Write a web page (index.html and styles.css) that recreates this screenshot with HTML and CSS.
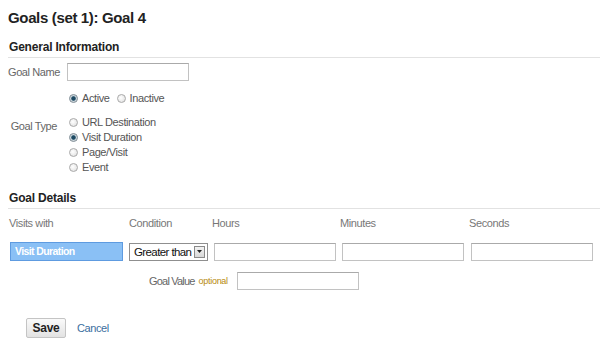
FILE: index.html
```html
<!DOCTYPE html>
<html lang="en">
<head>
    <meta charset="UTF-8">
    <title>Goals (set 1): Goal 4</title>
    <link rel="stylesheet" href="styles.css">
</head>
<body>
    <h1 class="page-title">Goals (set 1): Goal 4</h1>

    <div class="section general">
        <h2 class="section-title">General Information</h2>

        <div class="form-row name-row">
            <label class="row-label" for="goal-name">Goal Name</label>
            <input class="text-input name-input" type="text" id="goal-name">
        </div>

        <div class="form-row status-row">
            <span class="row-label"></span>
            <div class="radio-inline">
                <span class="radio checked"></span><span class="radio-text">Active</span>
                <span class="radio"></span><span class="radio-text">Inactive</span>
            </div>
        </div>

        <div class="form-row type-row">
            <span class="row-label">Goal Type</span>
            <div class="radio-list">
                <div class="radio-item"><span class="radio"></span><span class="radio-text">URL Destination</span></div>
                <div class="radio-item"><span class="radio checked"></span><span class="radio-text">Visit Duration</span></div>
                <div class="radio-item"><span class="radio"></span><span class="radio-text">Page/Visit</span></div>
                <div class="radio-item"><span class="radio"></span><span class="radio-text">Event</span></div>
            </div>
        </div>
    </div>

    <div class="section details">
        <h2 class="section-title">Goal Details</h2>

        <div class="details-grid">
            <div class="col-head">Visits with</div>
            <div class="col-head">Condition</div>
            <div class="col-head">Hours</div>
            <div class="col-head">Minutes</div>
            <div class="col-head">Seconds</div>

            <div class="visit-box">Visit Duration</div>
            <div class="select-box">
                <span class="select-text">Greater than</span>
                <span class="select-btn">
                    <svg width="5" height="3" viewBox="0 0 5 3"><path d="M0 0h5L2.5 3z" fill="#222"/></svg>
                </span>
            </div>
            <input class="text-input" type="text">
            <input class="text-input" type="text">
            <input class="text-input" type="text">
        </div>

        <div class="value-row">
            <span class="value-label">Goal Value</span>
            <span class="optional">optional</span>
            <input class="text-input value-input" type="text">
        </div>
    </div>

    <div class="actions">
        <button class="save-btn" type="button">Save</button>
        <a class="cancel-link" href="#">Cancel</a>
    </div>
</body>
</html>
```

FILE: styles.css
```css
body {
    font-family: "Liberation Sans", Arial, sans-serif;
    font-size: 11px;
    letter-spacing: -0.4px;
    color: #666;
    background: #fff;
    margin: 0;
    padding: 0 0 0 8px;
}

.page-title {
    font-size: 15px;
    font-weight: bold;
    letter-spacing: -0.35px;
    color: #222;
    margin: 0;
    padding-top: 9px;
    line-height: 18px;
}

.section-title {
    font-size: 12px;
    font-weight: bold;
    letter-spacing: -0.2px;
    color: #222;
    margin: 0;
    padding: 0 0 3px 1px;
    line-height: 14px;
    border-bottom: 1px solid #e2e2e2;
}

.general {
    margin-top: 13px;
}

.form-row {
    display: flex;
    align-items: flex-start;
}

.row-label {
    width: 49px;
    text-align: right;
    white-space: nowrap;
    flex-shrink: 0;
    margin-right: 10px;
    line-height: 14px;
}

.name-row {
    margin-top: 5px;
}

.name-row .row-label {
    line-height: 18px;
}

.text-input {
    box-sizing: border-box;
    height: 18px;
    border: 1px solid #c2c2c2;
    border-top-color: #aaa;
    margin: 0;
    padding: 0 3px;
    font-size: 11px;
    background: #fff;
}

.name-input {
    width: 122px;
}

.status-row {
    margin-top: 10px;
}

.radio-inline {
    display: flex;
    align-items: center;
    height: 14px;
}

.radio {
    box-sizing: border-box;
    width: 9px;
    height: 9px;
    border-radius: 50%;
    border: 1px solid #a9a9a9;
    background: radial-gradient(circle at 40% 40%, #fff, #dcdcdc);
    margin: 0 4px 0 2px;
    flex-shrink: 0;
}

.radio.checked {
    background: radial-gradient(circle, #1d4a63 0, #1d4a63 1.8px, #bfcdd5 2.6px, #eee 4px);
    border-color: #7c8a93;
}

.radio-text {
    color: #555;
    margin-right: 5px;
    line-height: 14px;
}

.type-row {
    margin-top: 10px;
}

.type-row .row-label {
    padding-top: 4px;
}

.radio-list {
    display: flex;
    flex-direction: column;
    gap: 1px;
}

.radio-item {
    display: flex;
    align-items: center;
    height: 14px;
}

.details {
    margin-top: 17px;
}

.details-grid {
    display: grid;
    grid-template-columns: 120px 83px 128px 129px 130px;
    grid-template-rows: 14px 19px;
    row-gap: 12px;
    align-items: center;
    margin-top: 7px;
    padding-left: 1px;
}

.col-head {
    color: #777;
    line-height: 14px;
}

.details-grid .text-input {
    width: 122px;
    margin-left: 2px;
}

.visit-box {
    box-sizing: border-box;
    width: 113px;
    height: 19px;
    margin-left: 1px;
    background: #8ac0f5;
    border: 1px solid #5e9be0;
    color: #fff;
    font-size: 10.5px;
    font-weight: bold;
    letter-spacing: -0.6px;
    line-height: 17px;
    padding-left: 4px;
}

.select-box {
    box-sizing: border-box;
    width: 79px;
    height: 18px;
    border: 1px solid #8f8f8f;
    display: flex;
    align-items: center;
    justify-content: space-between;
    padding: 0 2px 0 4px;
    background: #fff;
}

.select-text {
    color: #111;
    font-size: 11.5px;
    letter-spacing: -0.6px;
    white-space: nowrap;
}

.select-btn {
    box-sizing: border-box;
    width: 11px;
    height: 12px;
    border: 1px solid #8a8a8a;
    background: linear-gradient(#f3f3f3, #d8d8d8);
    display: flex;
    align-items: center;
    justify-content: center;
}

.value-row {
    display: flex;
    align-items: center;
    height: 18px;
    margin-top: 11px;
    padding-left: 141px;
}

.value-label {
    letter-spacing: -0.8px;
}

.optional {
    color: #b78a0e;
    font-size: 9px;
    letter-spacing: -0.3px;
    margin-left: 4px;
}

.value-input {
    width: 122px;
    margin-left: 9px;
}

.actions {
    display: flex;
    align-items: center;
    margin-top: 28px;
    padding-left: 18px;
}

.save-btn {
    font-family: "Liberation Sans", Arial, sans-serif;
    font-size: 12px;
    font-weight: bold;
    letter-spacing: -0.3px;
    color: #222;
    width: 40px;
    height: 20px;
    padding: 0;
    border: 1px solid #c4c4c4;
    border-radius: 2px;
    background: linear-gradient(#fafafa, #e2e2e2);
}

.cancel-link {
    color: #3b6e9e;
    text-decoration: none;
    margin-left: 11px;
}
```
